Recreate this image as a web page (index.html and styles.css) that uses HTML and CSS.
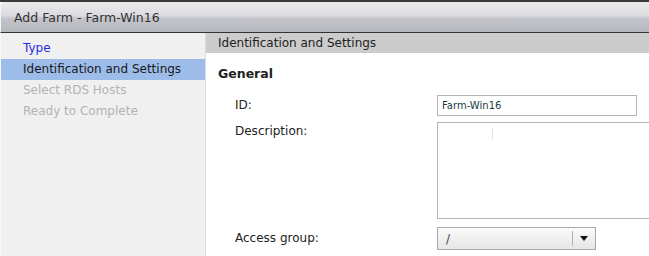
FILE: index.html
```html
<!DOCTYPE html>
<html lang="en">
<head>
  <meta charset="UTF-8" />
  <title>Add Farm - Farm-Win16</title>
  <link rel="stylesheet" href="styles.css">
</head>
<body>
  <div class="dialog">
    <div class="titlebar">Add Farm - Farm-Win16</div>
    <div class="main">
      <div class="steps">
        <div class="step done">Type</div>
        <div class="step current">Identification and Settings</div>
        <div class="step todo">Select RDS Hosts</div>
        <div class="step todo">Ready to Complete</div>
      </div>
      <div class="content">
        <div class="header">Identification and Settings</div>
        <div class="section">General</div>
        <div class="row">
          <label>ID:</label>
          <div class="field id-field">Farm-Win16</div>
        </div>
        <div class="row desc-row">
          <label>Description:</label>
          <div class="field desc-field"><span class="cursor"></span></div>
        </div>
        <div class="row">
          <label>Access group:</label>
          <div class="select">
            <span class="value">/</span>
            <span class="sep"></span>
            <span class="arrow"></span>
          </div>
        </div>
      </div>
    </div>
  </div>
</body>
</html>
```

FILE: styles.css
```css
body {
  margin: 0;
  background: #fff;
  font-family: "DejaVu Sans", Tahoma, sans-serif;
  font-size: 12px;
  color: #222;
}

.dialog {
  width: 649px;
  height: 256px;
  overflow: hidden;
  border-top: 2px solid #3a3a3a;
}

.titlebar {
  height: 30px;
  line-height: 31px;
  padding-left: 13px;
  font-size: 12.5px;
  color: #333;
  background: linear-gradient(#ebebed 0%, #dcdce0 45%, #c4c5ca 55%, #b6b7bc 100%);
  border-left: 1px solid #f4f4f4;
  border-radius: 4px 0 0 0;
  border-bottom: 1px solid #333;
}

.main {
  display: flex;
  height: 223px;
}

.steps {
  flex-shrink: 0;
  width: 204px;
  background: #f0f0f0;
  border-right: 1px solid #dcdcdc;
  padding-top: 5px;
  border-left: 1px solid #f8f8f8;
}

.step {
  height: 21px;
  line-height: 21px;
  padding-left: 22px;
  white-space: nowrap;
}

.step.done { color: #1f2ee0; }
.step.current { background: #9dbcea; color: #1a1a1a; }
.step.todo { color: #b3b3b3; }

.content {
  flex: 1;
  min-width: 0;
}

.header {
  height: 20px;
  line-height: 20px;
  background: #cccccc;
  padding-left: 12px;
}

.section {
  font-weight: bold;
  font-size: 12.5px;
  padding: 13px 0 0 12px;
  height: 20px;
}

.row {
  display: flex;
  align-items: flex-start;
  margin-top: 9px;
}

.row label {
  flex-shrink: 0;
  width: 202px;
  padding-left: 29px;
  line-height: 20px;
}

.field {
  flex-shrink: 0;
  border: 1px solid #b5b5b5;
  box-sizing: border-box;
  background: #fff;
}

.id-field {
  width: 200px;
  height: 21px;
  line-height: 19px;
  padding-left: 4px;
  font-size: 10px;
  color: #16403f;
}

.desc-row {
  margin-top: 6px;
}

.desc-field {
  width: 220px;
  height: 97px;
  position: relative;
}

.desc-row label {
  line-height: 18px;
}

.cursor {
  position: absolute;
  left: 54px;
  top: 5px;
  width: 1px;
  height: 12px;
  background: #e4e4e4;
}

.row:last-child {
  margin-top: 8px;
}

.row:last-child label {
  line-height: 22px;
}

.select {
  flex-shrink: 0;
  width: 159px;
  height: 23px;
  box-sizing: border-box;
  border: 1px solid #a8a8a8;
  background: linear-gradient(#fafafa, #e6e6e6);
  display: flex;
  align-items: center;
}

.select .value {
  flex: 1;
  padding-left: 8px;
  color: #444;
}

.select .sep {
  width: 1px;
  height: 15px;
  background: #b0b0b0;
}

.select .arrow {
  width: 0;
  height: 0;
  margin: 0 7px 0 7px;
  border-left: 4px solid transparent;
  border-right: 4px solid transparent;
  border-top: 5px solid #111;
}
```
